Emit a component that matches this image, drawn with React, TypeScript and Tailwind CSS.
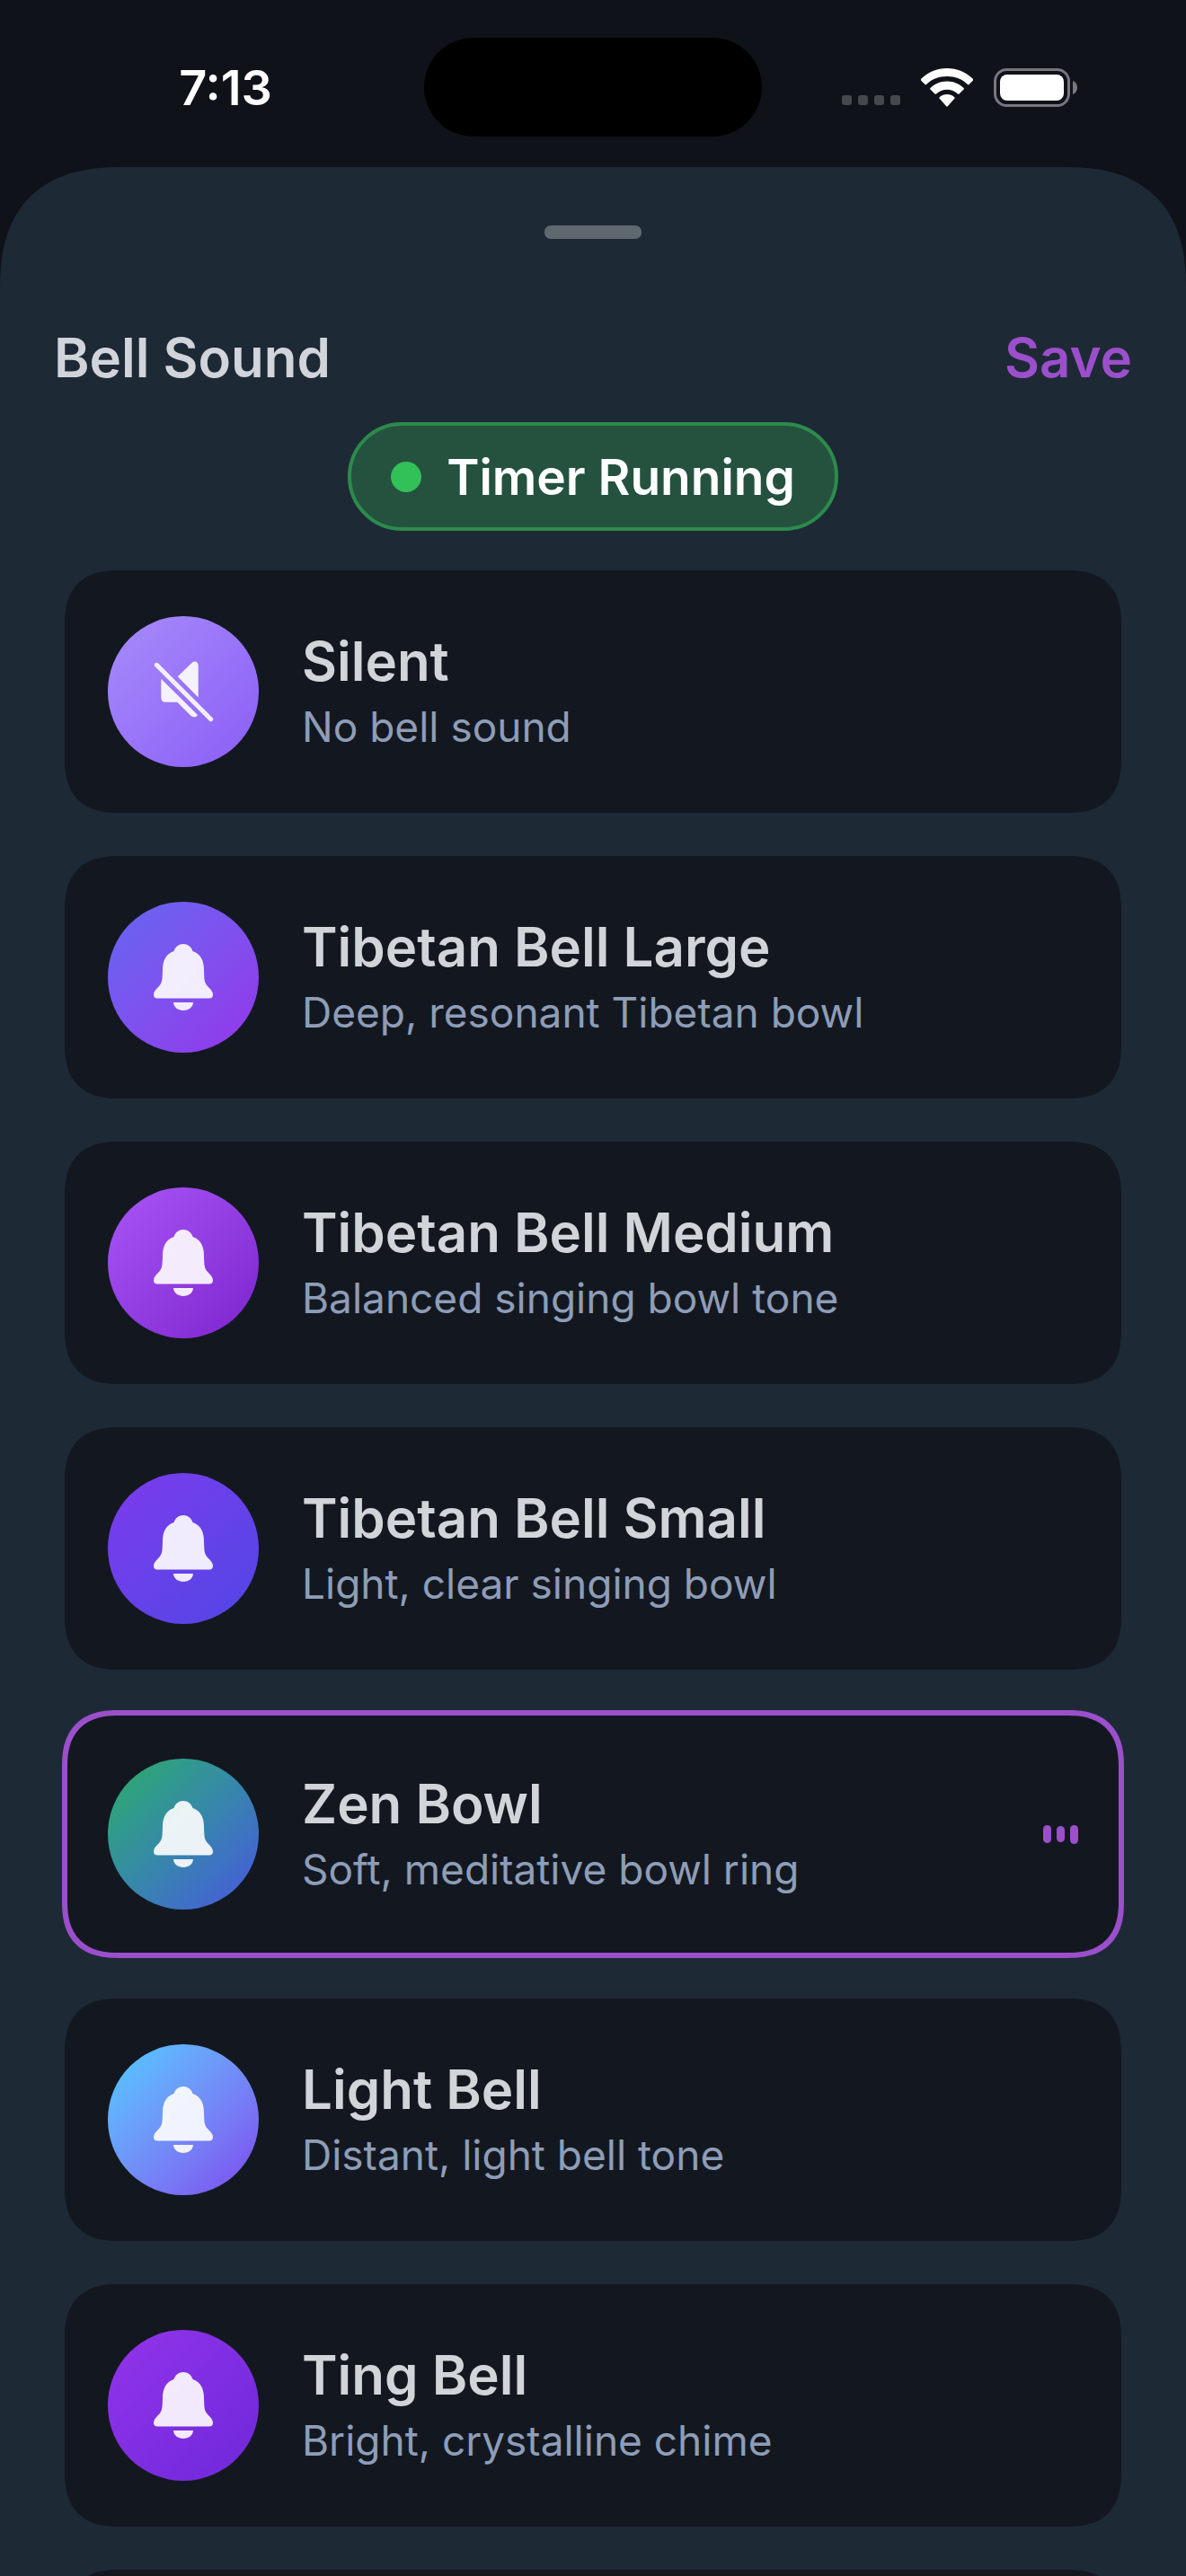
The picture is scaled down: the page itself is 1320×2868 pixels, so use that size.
import { useState } from "react";

type Sound = {
  id: string;
  name: string;
  description: string;
  gradient: string;
};

const sounds: Sound[] = [
  { id: "silent", name: "Silent", description: "No bell sound", gradient: "from-[#a78bfa] to-[#8b5cf6]" },
  { id: "tibetan-large", name: "Tibetan Bell Large", description: "Deep, resonant Tibetan bowl", gradient: "from-[#6366f1] to-[#9333ea]" },
  { id: "tibetan-medium", name: "Tibetan Bell Medium", description: "Balanced singing bowl tone", gradient: "from-[#a855f7] to-[#7e22ce]" },
  { id: "tibetan-small", name: "Tibetan Bell Small", description: "Light, clear singing bowl", gradient: "from-[#7c3aed] to-[#4f46e5]" },
  { id: "zen-bowl", name: "Zen Bowl", description: "Soft, meditative bowl ring", gradient: "from-[#2fad60] to-[#4a4fe0]" },
  { id: "light-bell", name: "Light Bell", description: "Distant, light bell tone", gradient: "from-[#4accff] to-[#7c45ed]" },
  { id: "ting-bell", name: "Ting Bell", description: "Bright, crystalline chime", gradient: "from-[#9333ea] to-[#6d28d9]" },
];

function BellIcon() {
  return (
    <svg viewBox="0 0 68 76" className="h-[76px] w-[68px] fill-white/90" aria-hidden="true">
      <path d="M34 1c5 0 9 3 10.500 8C53 12 57 19 57 30c.3 11 .5 14 4 18 3.500 3.500 6 6 6 9.500 0 2.500-1.500 4-4 4H5c-2.500 0-4-1.500-4-4C1 54 3.500 51.500 7 48c3.500-4 3.700-7 4-18 0-11 4-18 12.500-21C25 4 29 1 34 1Z" />
      <path d="M23 66h22c0 5-5 9-11 9s-11-4-11-9Z" />
    </svg>
  );
}

function MutedIcon() {
  return (
    <svg viewBox="0 0 68 68" className="h-[68px] w-[68px] fill-white/90" aria-hidden="true">
      <path d="M27.700 17.300 43 2.500c3.500-3.500 7.700-2 7.700 2.500v35.500Z" />
      <path d="M9.500 20 50 60c-1.500 3-5.500 3-8 .5L27.300 45.700H14.500c-3.500 0-5.200-1.700-5.200-5.200V21Z" />
      <path d="M4.300 4.300 64.700 64.700" className="stroke-[#f3effe] stroke-[5]" strokeLinecap="round" />
    </svg>
  );
}

function StatusBar() {
  return (
    <header className="grid h-[186px] grid-cols-[1fr_376px_1fr] items-start text-white">
      <div className="flex h-[196px] items-center justify-center pl-[30px]">
        <time className="text-[54px] leading-[60px] font-semibold">7:13</time>
      </div>
      <div className="mt-[42px] h-[110px] rounded-full bg-black" />
      <div className="flex h-[194px] items-center gap-[23px] pl-[89px]">
        <div className="flex h-10 items-end gap-[7px]">
          <span className="size-[11px] rounded-[3px] bg-[#45484d]" />
          <span className="size-[11px] rounded-[3px] bg-[#45484d]" />
          <span className="size-[11px] rounded-[3px] bg-[#45484d]" />
          <span className="size-[11px] rounded-[3px] bg-[#45484d]" />
        </div>
        <svg viewBox="0 0 58 43" className="h-[43px] w-[58px] fill-white" role="img" aria-label="Wi-Fi">
          <path d="M29 0c11 0 21 4 29 12 .5.500.5 1 0 1.500l-4.500 4.500c-.5.500-1 .5-1.500 0C46 12 38 9 29 9S12 12 6 18c-.5.500-1 .5-1.500 0L0 13.500c-.5-.5-.5-1 0-1.500C8 4 18 0 29 0Z" />
          <path d="M29 14.500c7 0 13.500 2.700 18.500 7.500.6.500.6 1 0 1.500l-5 5c-.5.500-1 .5-1.500 0-3.500-3-7.500-4.700-12-4.700s-8.500 1.700-12 4.700c-.5.500-1 .5-1.500 0l-5-5c-.6-.5-.6-1 0-1.500 5-4.800 11.500-7.500 18.500-7.500Z" />
          <path d="M29 29c3.200 0 6 1.200 8.300 3.200.6.500.6 1 0 1.600l-7.500 8.400c-.5.600-1.100.6-1.600 0l-7.500-8.400c-.6-.6-.6-1.100 0-1.600C23 30.200 25.800 29 29 29Z" />
        </svg>
        <svg viewBox="0 0 94 43" className="h-[43px] w-[94px]" role="img" aria-label="Battery">
          <rect x="1.500" y="1.500" width="82" height="40" rx="13" className="fill-none stroke-[#76787c] stroke-[3]" />
          <rect x="7" y="7" width="71" height="29" rx="8" className="fill-white" />
          <path d="M88 14c3 1 5 4 5 7.500s-2 6.500-5 7.500Z" className="fill-[#76787c]" />
        </svg>
      </div>
    </header>
  );
}

function PlayingBars() {
  return (
    <span className="flex items-center gap-[6px]">
      <span className="h-5 w-[9px] rounded-full bg-[#9b4fcb]" />
      <span className="h-[18px] w-[9px] rounded-full bg-[#9b4fcb]" />
      <span className="h-[21px] w-[9px] rounded-full bg-[#9b4fcb]" />
    </span>
  );
}

export default function App() {
  const [selected, setSelected] = useState("zen-bowl");

  return (
    <div className="h-screen overflow-hidden bg-[#0f1219] font-['Inter','Liberation_Sans',sans-serif]">
      <StatusBar />
      <main className="rounded-t-[136px] bg-[#1e2936] pt-[65px] [corner-shape:superellipse(1.3)]">
        <div className="mx-auto h-[15px] w-[108px] rounded-[7px] bg-[#60686f]" />

        <div className="mt-[92px] flex items-center justify-between px-[60px]">
          <h1 className="text-[60px] leading-[80px] font-semibold text-[#d1d4da]">Bell Sound</h1>
          <button type="button" className="text-[60px] leading-[80px] font-semibold text-[#9b4fcb]">
            Save
          </button>
        </div>

        <div className="mx-auto mt-8 flex h-[121px] w-fit items-center gap-[28px] rounded-full border-4 border-[#2c8b4b] bg-[#24523f] px-11">
          <span className="size-[34px] rounded-full bg-[#32c058]" />
          <span className="text-[55px] leading-[72px] font-semibold text-white">Timer Running</span>
        </div>

        <ul className="mt-11 flex flex-col gap-12 px-[72px]">
          {sounds.map((sound) => (
            <li key={sound.id}>
              <button
                type="button"
                aria-pressed={selected === sound.id}
                onClick={() => setSelected(sound.id)}
                className={`flex h-[270px] w-full items-center gap-12 rounded-[60px] bg-[#131820] px-12 text-left [corner-shape:superellipse(1.3)] ${
                  selected === sound.id ? "outline-6 -outline-offset-3 outline-[#9b4fcb]" : ""
                }`}
              >
                <span className={`flex size-[168px] shrink-0 items-center justify-center rounded-full bg-linear-to-br ${sound.gradient}`}>
                  {sound.id === "silent" ? <MutedIcon /> : <BellIcon />}
                </span>
                <span className="flex flex-1 flex-col">
                  <span className="text-[60px] leading-[78px] font-semibold text-[#d1d4d8]">{sound.name}</span>
                  <span className="text-[46px] leading-[68px] text-[#8e9db7]">{sound.description}</span>
                </span>
                {selected === sound.id && <PlayingBars />}
              </button>
            </li>
          ))}
          {/* empty row peeking in at the bottom of the list */}
          <li className="h-[270px] rounded-[60px] bg-[#131820] [corner-shape:superellipse(1.3)]" aria-hidden="true" />
        </ul>
      </main>
    </div>
  );
}
